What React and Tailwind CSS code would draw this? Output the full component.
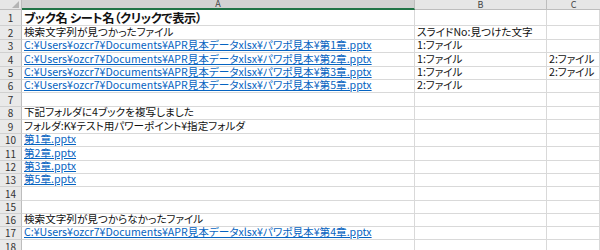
const base = 'C:¥Users¥ozcr7¥Documents¥APR見本データxlsx¥パワポ見本¥'

const rows = [
  { n: 1, h: 'h-[16px]', title: 'ブック名 シート名（クリックで表示）' },
  { n: 2, h: 'h-[14px]', a: '検索文字列が見つかったファイル', b: 'スライドNo:見つけた文字' },
  { n: 3, h: 'h-[13px]', link: base + '第1章.pptx', b: '1:ファイル' },
  { n: 4, h: 'h-[14px]', link: base + '第2章.pptx', b: '1:ファイル', c: '2:ファイル' },
  { n: 5, h: 'h-[13px]', link: base + '第3章.pptx', b: '1:ファイル', c: '2:ファイル' },
  { n: 6, h: 'h-[13px]', link: base + '第5章.pptx', b: '2:ファイル' },
  { n: 7, h: 'h-[14px]' },
  { n: 8, h: 'h-[13px]', a: '下記フォルダに4ブックを複写しました' },
  { n: 9, h: 'h-[14px]', a: 'フォルダ:K¥テスト用パワーポイント¥指定フォルダ' },
  { n: 10, h: 'h-[13px]', link: '第1章.pptx' },
  { n: 11, h: 'h-[14px]', link: '第2章.pptx' },
  { n: 12, h: 'h-[13px]', link: '第3章.pptx' },
  { n: 13, h: 'h-[13px]', link: '第5章.pptx' },
  { n: 14, h: 'h-[14px]' },
  { n: 15, h: 'h-[13px]' },
  { n: 16, h: 'h-[13px]', a: '検索文字列が見つからなかったファイル' },
  { n: 17, h: 'h-[13px]', link: base + '第4章.pptx' },
  { n: 18, h: 'h-[14px]' },
]

const cell = 'border-r border-b border-[#d9d9d9] flex items-end overflow-visible whitespace-nowrap pl-[2px] pb-[1px]'

export default function App() {
  return (
    <div className="w-[600px] h-[250px] overflow-hidden bg-white text-[10.6px] leading-none text-[#111] [font-family:'Noto_Sans_CJK_JP',sans-serif] [font-feature-settings:'palt']">
      {/* column headers */}
      <div className="flex h-[10px] text-[9px] leading-[8px] text-[#444]">
        <div className="w-[22px] shrink-0 bg-[#e6e6e6] border-r border-b border-[#bdbdbd] relative">
          <div className="absolute right-[2px] bottom-[1px] w-0 h-0 border-l-[7px] border-l-transparent border-b-[7px] border-b-[#b4b4b4]" />
        </div>
        <div className="w-[393px] shrink-0 bg-[#d2d2d2] border-r border-[#bdbdbd] border-b-2 border-b-[#217346] flex items-center justify-center">A</div>
        <div className="w-[132px] shrink-0 bg-[#e6e6e6] border-r border-b border-[#bdbdbd] flex items-center justify-center">B</div>
        <div className="flex-1 bg-[#e6e6e6] border-b border-[#bdbdbd] flex items-center justify-center">C</div>
      </div>

      {rows.map(r => (
        <div key={r.n} className={`flex ${r.h}`}>
          <div className="w-[22px] shrink-0 bg-[#e9e9e9] border-r border-r-[#bdbdbd] border-b border-b-[#d0d0d0] flex items-center justify-center text-[10px] text-[#333]">
            {r.n}
          </div>
          <div className={`w-[393px] shrink-0 ${cell}`}>
            {r.title && <span className="text-[12.2px] font-bold tracking-[-0.3px]">{r.title}</span>}
            {r.a && <span>{r.a}</span>}
            {r.link && <span className="text-[#0563c1] underline underline-offset-1">{r.link}</span>}
          </div>
          <div className={`w-[132px] shrink-0 ${cell}`}>{r.b}</div>
          <div className={`flex-1 ${cell}`}>{r.c}</div>
        </div>
      ))}
    </div>
  )
}
